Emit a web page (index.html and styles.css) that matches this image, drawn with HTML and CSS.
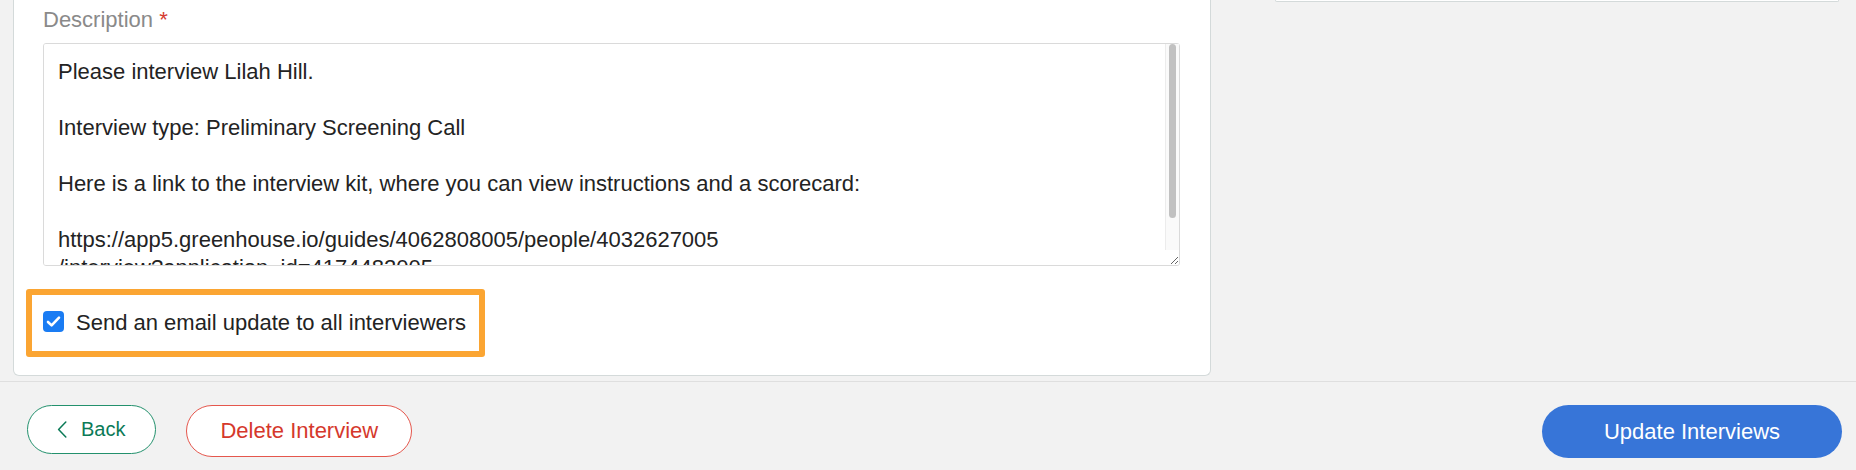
FILE: index.html
```html
<!DOCTYPE html>
<html lang="en">
<head>
<meta charset="UTF-8">
<title>Edit Interview</title>
<link rel="stylesheet" href="styles.css">
</head>
<body>
<div class="main">
  <section class="card">
    <label class="field-label" for="desc">Description <span class="req">*</span></label>
    <div class="desc-wrap">
      <textarea id="desc" class="desc">Please interview Lilah Hill.

Interview type: Preliminary Screening Call

Here is a link to the interview kit, where you can view instructions and a scorecard:

https://app5.greenhouse.io/guides/4062808005/people/4032627005
/interview?application_id=4174482005
</textarea>
      <div class="scroll-track"><div class="scroll-thumb"></div></div>
    </div>
    <label class="notify">
      <span class="check">
        <svg width="21" height="21" viewBox="0 0 21 21"><path d="M5 11 L8.6 14.4 L16 6.6" fill="none" stroke="#fff" stroke-width="2.6" stroke-linecap="round" stroke-linejoin="round"/></svg>
      </span>
      Send an email update to all interviewers
    </label>
  </section>
  <aside class="side">
    <div class="side-card"></div>
  </aside>
</div>

<footer class="actions">
  <div class="actions-left">
    <button class="btn btn-back">
      <svg width="10" height="17" viewBox="0 0 10 17"><path d="M8.8 1 L1.6 8.5 L8.8 16" fill="none" stroke="#0b7a57" stroke-width="1.5" stroke-linecap="round" stroke-linejoin="round"/></svg>
      Back
    </button>
    <button class="btn btn-delete">Delete Interview</button>
  </div>
  <button class="btn btn-primary">Update Interviews</button>
</footer>
</body>
</html>
```

FILE: styles.css
```css
body { margin:0; background:#f2f2f2; font-family:"Liberation Sans", Arial, sans-serif; color:#232323; }

.main { display:flex; align-items:flex-start; gap:64px; padding:0 17px 5px 13px; }
.card { width:1198px; box-sizing:border-box; background:#fff; border:1px solid #d4dada; border-top:none; border-radius:0 0 6px 6px; padding:6px 30px 18px 29px; }
.side { width:564px; }
.side-card { height:1px; background:#fff; border:1px solid #d4dada; border-top:none; border-radius:0 0 6px 6px; }

.field-label { display:block; font-size:22px; line-height:28px; color:#8a8a8a; margin-bottom:9px; }
.req { color:#d63b30; }

.desc-wrap { position:relative; }
.desc { display:block; width:100%; height:223px; box-sizing:border-box; margin:0; padding:14px 29px 14px 14px; border:1px solid #dadada; border-radius:3px; font:22px/28px "Liberation Sans", Arial, sans-serif; color:#232323; resize:vertical; outline:none; }
.scroll-track { position:absolute; top:1px; right:1px; width:14px; height:206px; box-sizing:border-box; background:#fafafa; border-left:1px solid #ececec; }
.scroll-thumb { width:7px; height:174px; margin-left:3px; background:#c1c1c1; border-radius:4px; }

.notify { display:inline-flex; align-items:center; gap:12px; margin:23px 0 0 -17px; padding:14px 13px 14px 11px; border:6px solid #fba532; border-radius:3px; font-size:22px; line-height:28px; color:#232323; }
.check { display:block; width:21px; height:21px; margin-bottom:3px; background:#1a7cf3; border-radius:4px; }
.check svg { display:block; }

.actions { display:flex; justify-content:space-between; align-items:flex-start; border-top:1px solid #dfdfdf; padding:23px 14px 20px 27px; }
.actions-left { display:flex; align-items:flex-start; gap:30px; }
.btn { height:52px; box-sizing:border-box; border-radius:999px; background:#fff; font:22px "Liberation Sans", Arial, sans-serif; cursor:pointer; }
.btn-back { height:49px; display:inline-flex; align-items:center; gap:14px; padding:0 30px 0 29px; border:1.5px solid #23916d; color:#0b7a57; font-size:20px; }
.btn-back svg { display:block; }
.btn-delete { padding:0 33px; border:1.5px solid #e5574d; color:#d5382c; }
.btn-primary { width:300px; height:53px; border:none; background:#3775d8; color:#fff; }
```
